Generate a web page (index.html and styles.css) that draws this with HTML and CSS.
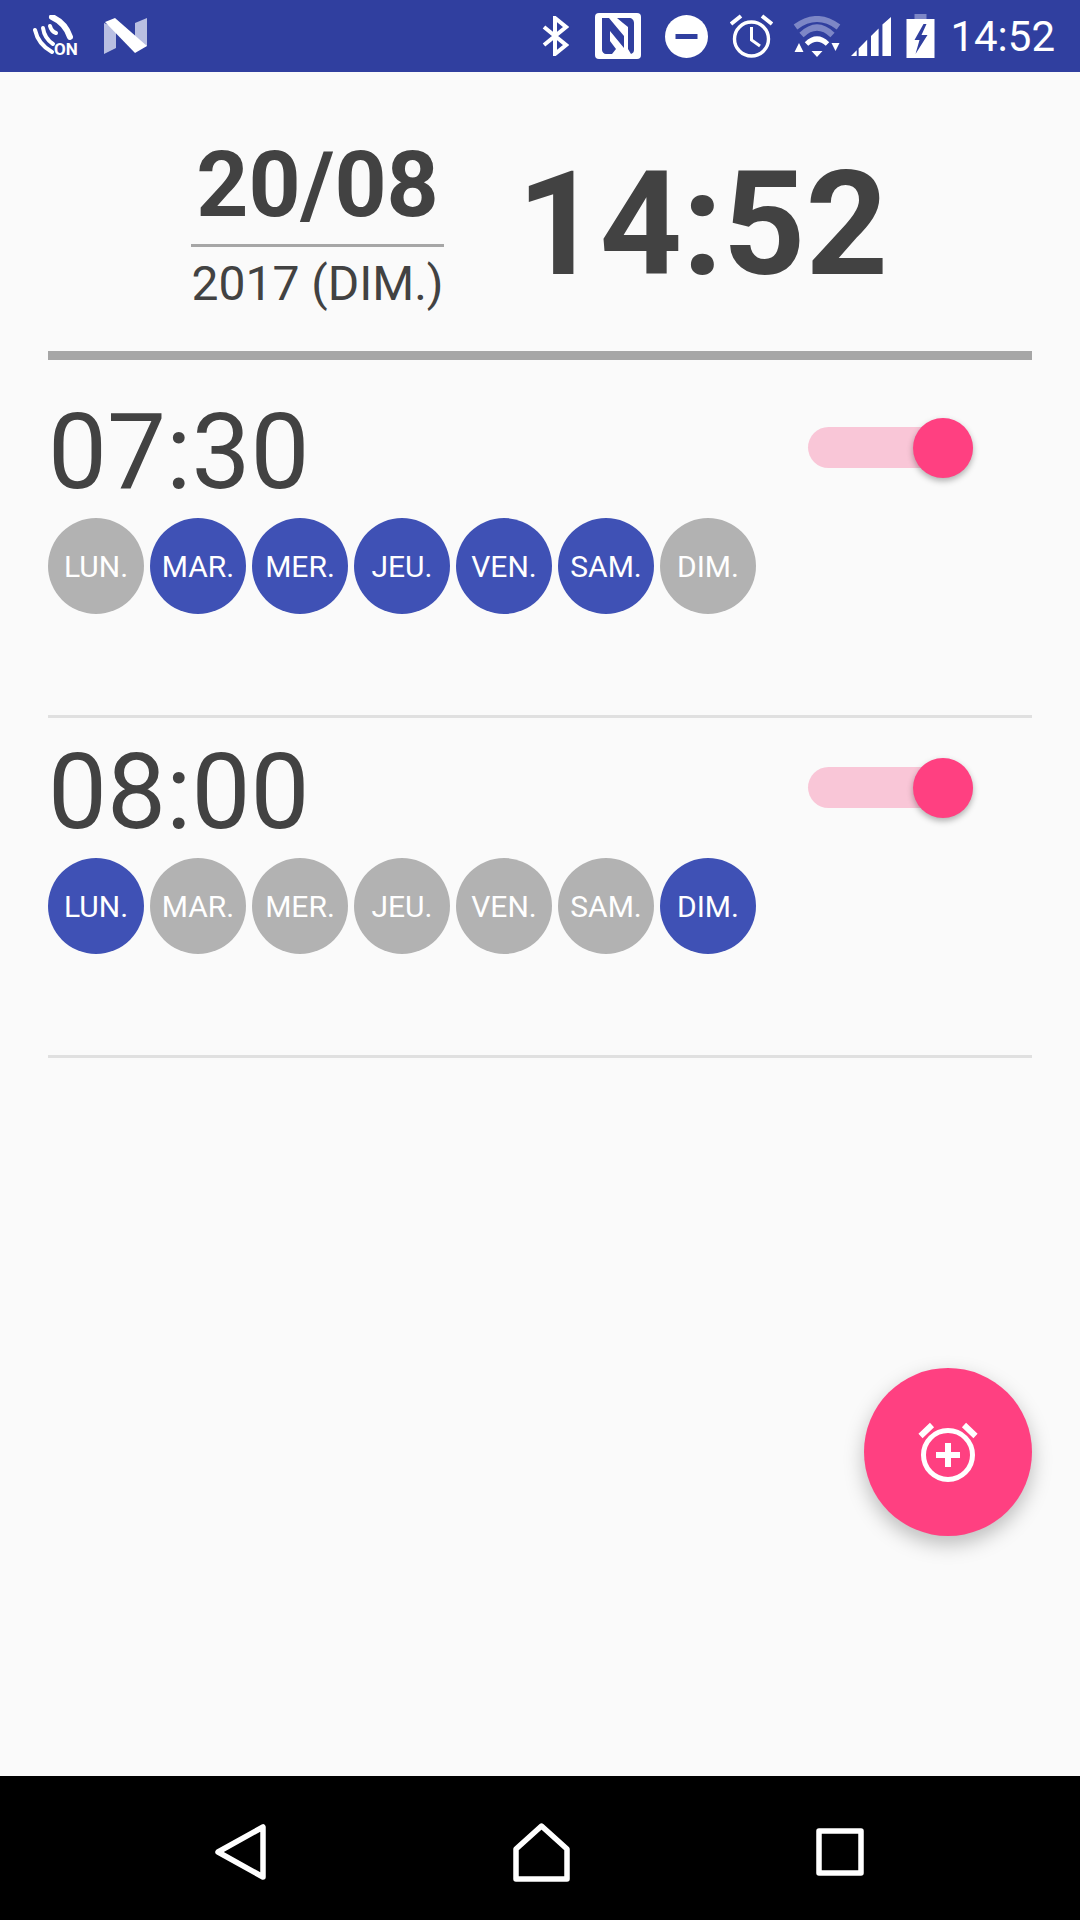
FILE: index.html
```html
<!DOCTYPE html>
<html lang="fr">
<head>
    <meta charset="UTF-8">
    <meta name="viewport" content="width=device-width, initial-scale=1.0">
    <title>Alarmes</title>
    <link rel="stylesheet" href="styles.css">
</head>
<body>
    <div class="status-bar">
        <svg class="icon-on" width="48" height="46" viewBox="0 0 48 46">
            <path d="M19 2 C28 6 34 13 37 22" fill="none" stroke="#fff" stroke-width="6" stroke-linecap="round"/>
            <path d="M2 15 C4 24 10 32 19 37" fill="none" stroke="#fff" stroke-width="4" stroke-linecap="round"/>
            <path d="M10 13 C11 20 14 25 20 29" fill="none" stroke="#fff" stroke-width="4" stroke-linecap="round"/>
            <path d="M17 11 C18 15 20 17 23 18" fill="none" stroke="#fff" stroke-width="4" stroke-linecap="round"/>
            <text x="21" y="40" class="on-text">ON</text>
        </svg>
        <svg class="icon-n" width="44" height="36" viewBox="0 0 44 36">
            <path d="M0 5 L12 10 V30 L0 36 Z" fill="#b9bfe2"/>
            <path d="M43 0 V28 L31 30 V5 Z" fill="#b9bfe2"/>
            <path d="M1 4 L11 0 L43 28 L31 35 Z" fill="#fff"/>
        </svg>
        <div class="status-right">
            <svg class="icon-bt" width="27" height="40" viewBox="0 0 27 40">
                <path d="M2 11 L24 29 L13 38 V2 L24 11 L2 29" fill="none" stroke="#fff" stroke-width="4"/>
            </svg>
            <svg class="icon-nfc" width="46" height="46" viewBox="0 0 46 46">
                <rect width="46" height="46" rx="4" fill="#fff"/>
                <path d="M7 5 H14 L29 23 V35 L15 18 V28 L21 36 L17 41 H11 C9 41 7 39 7 37 Z" fill="#303f9f"/>
                <path d="M22 5 H34 C37 5 39 7 39 10 V37 C39 39 38 40 36 41 L33 36 V14 L28 10 Z" fill="#303f9f"/>
            </svg>
            <svg class="icon-dnd" width="43" height="43" viewBox="0 0 43 43">
                <circle cx="21.500" cy="21.500" r="21.500" fill="#fff"/>
                <rect x="10.500" y="19" width="22" height="5" fill="#303f9f"/>
            </svg>
            <svg class="icon-alarm" width="43" height="44" viewBox="0 0 43 44">
                <circle cx="21.500" cy="25" r="17" fill="none" stroke="#fff" stroke-width="3.400"/>
                <path d="M21.500 13 V26 L30 32" fill="none" stroke="#fff" stroke-width="3"/>
                <path d="M1 10 L11 2 M42 10 L32 2" fill="none" stroke="#fff" stroke-width="4"/>
            </svg>
            <svg class="icon-wifi" width="50" height="41" viewBox="0 0 49 41">
                <path d="M3 11 Q24.500 -5 46 11" fill="none" stroke="#7d87c6" stroke-width="6"/>
                <path d="M9 19 Q24.500 4 40 19" fill="none" stroke="#7d87c6" stroke-width="6"/>
                <path d="M14 28 Q24.500 18 35 28" fill="none" stroke="#fff" stroke-width="5"/>
                <path d="M19 35 H30 L24.500 41 Z M2 36 H11 L6.500 27 Z M39 27 H47 L43 35 Z" fill="#fff"/>
            </svg>
            <svg class="icon-signal" width="40" height="41" viewBox="0 0 42 41">
                <path d="M0 41 L6 35 V41 Z M8 33 L17 24 V41 H8 Z M21 20 L29 12 V41 H21 Z M33 8 L42 0 V41 H33 Z" fill="#fff"/>
            </svg>
            <svg class="icon-battery" width="29" height="44" viewBox="0 0 28 44">
                <path d="M8 0 H20 V5 H8 Z" fill="#7d87c6"/>
                <rect y="5" width="28" height="39" fill="#fff"/>
                <path d="M17 10 L8 26 H13 L9 40 L21 21 H15 L20 10 Z" fill="#303f9f"/>
            </svg>
            <span class="status-time">14:52</span>
        </div>
    </div>

    <div class="content">
        <div class="clock">
            <div class="clock-date">
                <div class="clock-day">20/08</div>
                <div class="clock-year">2017 (DIM.)</div>
            </div>
            <div class="clock-now">14:52</div>
        </div>

        <div class="alarm">
            <div class="alarm-top">
                <span class="alarm-time">07:30</span>
                <span class="switch"><span class="switch-thumb"></span></span>
            </div>
            <div class="days">
                <span class="day">LUN.</span>
                <span class="day on">MAR.</span>
                <span class="day on">MER.</span>
                <span class="day on">JEU.</span>
                <span class="day on">VEN.</span>
                <span class="day on">SAM.</span>
                <span class="day">DIM.</span>
            </div>
        </div>

        <div class="alarm">
            <div class="alarm-top">
                <span class="alarm-time">08:00</span>
                <span class="switch"><span class="switch-thumb"></span></span>
            </div>
            <div class="days">
                <span class="day on">LUN.</span>
                <span class="day">MAR.</span>
                <span class="day">MER.</span>
                <span class="day">JEU.</span>
                <span class="day">VEN.</span>
                <span class="day">SAM.</span>
                <span class="day on">DIM.</span>
            </div>
        </div>

        <div class="fab">
            <svg width="60" height="60" viewBox="0 0 60 60">
                <circle cx="30" cy="33" r="24.500" fill="none" stroke="#fff" stroke-width="5"/>
                <path d="M30 21 V45 M18 33 H42" fill="none" stroke="#fff" stroke-width="6"/>
                <path d="M2.500 14 L14 3 M57.500 14 L46 3" fill="none" stroke="#fff" stroke-width="6"/>
            </svg>
        </div>
    </div>

    <div class="nav-bar">
        <svg width="51" height="56" viewBox="0 0 51 56">
            <path d="M48 3 V53 L3 28 Z" fill="none" stroke="#fff" stroke-width="5.500" stroke-linejoin="round"/>
        </svg>
        <svg width="57" height="59" viewBox="0 0 57 59">
            <path d="M28.500 3 L54 26 V56 H3 V26 Z" fill="none" stroke="#fff" stroke-width="5.500" stroke-linejoin="round"/>
        </svg>
        <svg width="48" height="48" viewBox="0 0 48 48">
            <rect x="3" y="3" width="42" height="42" fill="none" stroke="#fff" stroke-width="5.500" stroke-linejoin="round"/>
        </svg>
    </div>
</body>
</html>
```

FILE: styles.css
```css
* {
    box-sizing: border-box;
}
body {
    font-family: Roboto, sans-serif;
    margin: 0;
    padding: 0;
    width: 1080px;
    height: 1920px;
    background-color: #fafafa;
    color: #424242;
    display: flex;
    flex-direction: column;
    overflow: hidden;
}
.status-bar {
    height: 72px;
    background-color: #303f9f;
    display: flex;
    align-items: center;
    padding: 0 25px 0 33px;
    flex-shrink: 0;
}
.icon-on {
    margin-top: 4px;
}
.icon-n {
    margin-left: 23px;
}
.on-text {
    font-family: Roboto, sans-serif;
    font-size: 17px;
    font-weight: 700;
    fill: #fff;
}
.status-right {
    margin-left: auto;
    display: flex;
    align-items: center;
    height: 72px;
}
.icon-nfc {
    margin-left: 26px;
}
.icon-dnd {
    margin-left: 24px;
}
.icon-alarm {
    margin-left: 22px;
}
.icon-wifi {
    margin-left: 19px;
}
.icon-signal {
    margin-left: 9px;
}
.icon-battery {
    margin-left: 15px;
}
.status-time {
    color: #fff;
    font-size: 42px;
    margin-left: 15px;
}
.content {
    flex: 1;
    position: relative;
    padding: 0 48px;
}
.clock {
    height: 288px;
    display: flex;
    align-items: flex-start;
    padding: 65px 0 0 143px;
    margin-bottom: 18px;
    border-bottom: 9px solid #a6a6a6;
}
.clock-date {
    width: 253px;
    text-align: center;
}
.clock-day {
    font-size: 91px;
    font-weight: 700;
    line-height: 96px;
    padding-bottom: 11px;
    border-bottom: 3px solid #a6a6a6;
}
.clock-year {
    font-size: 48px;
    line-height: 74px;
}
.clock-now {
    font-size: 144px;
    line-height: 144px;
    font-weight: 700;
    margin: 16px 0 0 73px;
}
.alarm {
    height: 340px;
    padding-top: 28px;
    border-bottom: 3px solid #e0e0e0;
}
.alarm-top {
    height: 92px;
    display: flex;
    align-items: center;
    justify-content: space-between;
    padding-right: 59px;
}
.alarm-time {
    font-size: 105px;
}
.switch {
    position: relative;
    display: block;
    width: 165px;
    height: 41px;
    margin-bottom: 9px;
    border-radius: 21px;
    background-color: #f9c6d7;
}
.switch-thumb {
    position: absolute;
    right: 0;
    top: -9px;
    width: 60px;
    height: 60px;
    border-radius: 50%;
    background-color: #ff4081;
    box-shadow: 0 3px 6px rgba(0, 0, 0, 0.3);
}
.days {
    display: flex;
    gap: 6px;
    margin-top: 20px;
}
.day {
    width: 96px;
    height: 96px;
    border-radius: 50%;
    background-color: #b2b2b2;
    color: #fff;
    font-size: 30px;
    display: flex;
    align-items: center;
    justify-content: center;
}
.day.on {
    background-color: #3f51b5;
}
.fab {
    position: absolute;
    left: 864px;
    top: 1296px;
    width: 168px;
    height: 168px;
    border-radius: 50%;
    background-color: #ff4081;
    box-shadow: 0 8px 20px rgba(0, 0, 0, 0.25);
    display: flex;
    align-items: center;
    justify-content: center;
}
.nav-bar {
    height: 144px;
    background-color: #000;
    flex-shrink: 0;
    display: flex;
    align-items: center;
    justify-content: space-between;
    padding: 8px 216px 0 215px;
}
```
